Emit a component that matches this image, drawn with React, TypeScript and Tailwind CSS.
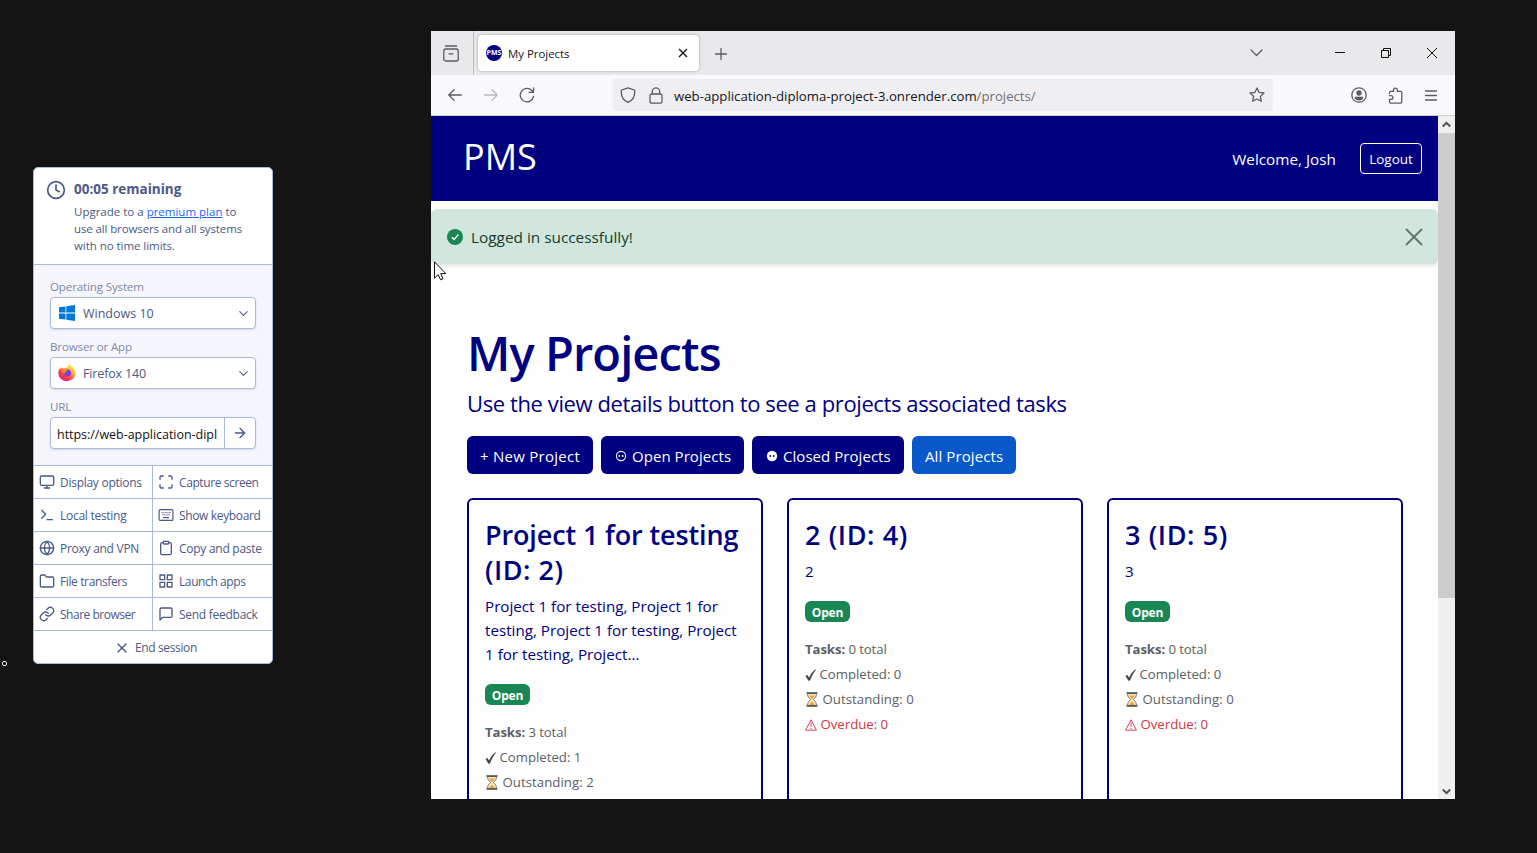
import React from "react";
import {
  FiMonitor, FiMaximize, FiTerminal, FiGlobe, FiClipboard, FiFolder, FiGrid,
  FiLink, FiMessageSquare, FiX, FiClock, FiArrowRight, FiChevronDown,
} from "react-icons/fi";

const T = ({ className = "", children }: { className?: string; children: React.ReactNode }) => (
  <span className={`whitespace-nowrap ${className}`}>{children}</span>
);

function KeyboardIcon() {
  return (
    <svg width="16" height="16" viewBox="0 0 16 16" fill="none" stroke="currentColor" strokeWidth="1.2">
      <rect x="1.1" y="2.6" width="13.8" height="10.8" rx="1" />
      <path d="M3.5 5.6h9M4.5 7.9h8" strokeDasharray="1 1" />
      <path d="M5 10.6h6" />
    </svg>
  );
}

function WindowsIcon() {
  return (
    <svg className="ml-[1px]" width="16" height="16" viewBox="0 0 16 16" fill="#0078d7">
      <path d="M0 2.3 6.5 1.4v6.2H0zM7.3 1.3 16 0v7.6H7.3zM0 8.4h6.5v6.2L0 13.7zM7.3 8.4H16V16l-8.7-1.3z" />
    </svg>
  );
}

function FirefoxIcon() {
  return (
    <svg width="18" height="18" viewBox="0 0 18 18">
      <defs>
        <linearGradient id="fx-body" x1="0.85" y1="0.1" x2="0.2" y2="0.95">
          <stop offset="0" stopColor="#fff44f" />
          <stop offset="0.35" stopColor="#ffa436" />
          <stop offset="0.6" stopColor="#ff4f3e" />
          <stop offset="1" stopColor="#e31587" />
        </linearGradient>
      </defs>
      <path d="M11.4.3c1 1.5 3.500 2.400 4.700 4.400 1 1.500 1.600 3 1.500 4.900A8.700 8.700 0 0 1 .3 9.400C.2 7 1 5.200 1.700 4.200L2 5.400 3 3l.8 1.400c1-.4 1.700-.2 2.600.2C7.700 3.300 9.400 3.600 10 3.700 10 2.200 10.500 1.200 11.400.3z" fill="url(#fx-body)" />
      <circle cx="9.600" cy="9" r="3.500" fill="#7a3fe0" />
      <path d="M4 5.200c1.200-.5 2.300 0 3 .6 1 .2 1.800.3 2.400.6-.3.900-1.700 1-2.200 1.300.2 1.300-.6 1.800-1.600 1.700-1-1.200-1.500-2.700-1.600-4.200z" fill="#ff8a16" />
    </svg>
  );
}

function Select({ icon, children }: { icon: React.ReactNode; children: React.ReactNode }) {
  return (
    <div className="flex h-8 items-center rounded-[4px] border border-[#aab8da] bg-white pl-[7px] pr-[4px] shadow-[0_1px_2px_rgba(60,70,120,0.15)]">
      <span className="flex w-[25px] items-center">{icon}</span>
      {children}
      <FiChevronDown className="ml-auto mt-[1px] text-[#5d6a8c]" size={15} />
    </div>
  );
}

function SidePanel() {
  const label = "flex h-[14px] items-center text-[11.6px] tracking-[-0.16px] text-[#7f88a8] mb-[3px]";
  const rows: [React.ReactNode, string, string, React.ReactNode, string, string][] = [
    [<FiMonitor size={16} />, "Display options", "", <FiMaximize size={16} />, "Capture screen", "tracking-[-0.4px]"],
    [<FiTerminal size={16} />, "Local testing", "", <KeyboardIcon />, "Show keyboard", "tracking-[-0.35px]"],
    [<FiGlobe size={16} />, "Proxy and VPN", "", <FiClipboard size={16} />, "Copy and paste", ""],
    [<FiFolder size={16} />, "File transfers", "tracking-[-0.38px]", <FiGrid size={16} />, "Launch apps", "tracking-[-0.4px]"],
    [<FiLink size={16} />, "Share browser", "tracking-[-0.48px]", <FiMessageSquare size={16} />, "Send feedback", ""],
  ];
  return (
    <aside className="mt-[167px] ml-[33px] h-[497px] w-[240px] overflow-hidden rounded-[5px] border border-[#aab8da] bg-white text-[12px] text-[#4b5985]">
      <div className="flex h-[96px] pl-[12px] pt-[11px]">
        <FiClock size={20} className="mt-[1px]" />
        <div className="ml-[8px]">
          <div className="flex h-[20px] items-center text-[13.5px] font-bold"><T className="mt-[1px]">00:05 remaining</T></div>
          <div className="mt-[4px] text-[11.5px] leading-[17px] tracking-[-0.12px]">
            <div><T className="tracking-[0px]">Upgrade to a <a className="text-[#1f5fff] underline">premium plan</a> to</T></div>
            <div><T>use all browsers and all systems</T></div>
            <div><T className="tracking-[-0.05px]">with no time limits.</T></div>
          </div>
        </div>
      </div>
      <div className="h-[202px] border-y border-[#aab8da] bg-[#f5f6fb] px-4 pt-[15px]">
        <div className={label}><T>Operating System</T></div>
        <Select icon={<WindowsIcon />}><T className="mt-[2px] text-[12.5px]">Windows 10</T></Select>
        <div className={`${label} mt-[11px]`}><T>Browser or App</T></div>
        <Select icon={<FirefoxIcon />}><T className="mt-[2px] text-[12.5px] tracking-[-0.15px]">Firefox 140</T></Select>
        <div className={`${label} mt-[11px]`}><T>URL</T></div>
        <div className="flex h-8 rounded-[4px] border border-[#aab8da] bg-white shadow-[0_1px_2px_rgba(60,70,120,0.15)]">
          <div className="flex w-[174px] items-center border-r border-[#aab8da] pl-[6px] pr-[7px]">
            <div className="mt-[4px] text-[12.5px] tracking-[-0.03px] text-[#111]"><T>https://web-application-dipl</T></div>
          </div>
          <div className="flex flex-1 items-center justify-center"><FiArrowRight size={16} /></div>
        </div>
      </div>
      {rows.map((r, i) => (
        <div key={i} className="flex h-[33px] border-b border-[#aab8da] tracking-[-0.27px]">
          <div className="flex w-[119px] items-center border-r border-[#aab8da] pl-[5px]">
            {r[0]}<T className={`mt-[2px] ml-[5px] ${r[2]}`}>{r[1]}</T>
          </div>
          <div className="flex items-center pl-[5px]">
            {r[3]}<T className={`mt-[2px] ml-[5px] ${r[5]}`}>{r[4]}</T>
          </div>
        </div>
      ))}
      <div className="flex h-[33px] items-center pl-[80px] tracking-[-0.37px]">
        <FiX size={16} /><T className="mt-[1px] ml-[5px]">End session</T>
      </div>
    </aside>
  );
}

const ink = { fill: "none", stroke: "#5b5b66", strokeWidth: 1.3, strokeLinecap: "round", strokeLinejoin: "round" } as const;

function TitleBar() {
  return (
    <div className="flex h-[44px] bg-[#e9e9eb]">
      <div className="flex w-[43px] items-center border-r border-[#bdbdc2] pl-[12px]">
        <svg width="16" height="17" viewBox="0 0 16 17" {...ink}>
          <path d="M2.500 1h11" /><rect x=".8" y="4" width="14.400" height="12" rx="2" /><path d="M6 8.800h4" />
        </svg>
      </div>
      <div className="mt-[4px] ml-[4px] flex h-[36px] w-[221px] items-center rounded-[4px] bg-white pl-[8px] pr-[11px] shadow-[0_0_3px_rgba(0,0,0,0.3)]">
        <span className="flex size-4 items-center justify-center overflow-hidden rounded-full bg-[#000080] text-[7px] font-bold text-white">PMS</span>
        <T className="mt-[2px] ml-[6px] text-[11.4px] text-[#15141a]">My Projects</T>
        <svg className="ml-auto" width="10" height="10" viewBox="0 0 10 10" stroke="#15141a" strokeWidth="1.400"><path d="M1 1l8 8M9 1L1 9" /></svg>
      </div>
      <svg className="mt-[17px] ml-[16px]" width="12" height="12" viewBox="0 0 12 12" {...ink}><path d="M6 .5v11M.5 6h11" /></svg>
      <svg className="mt-[18px] ml-[523px]" width="13" height="8" viewBox="0 0 13 8" {...ink}><path d="M1 1l5.500 5.500L12 1" /></svg>
      <svg className="mt-[17px] ml-[72px]" width="10" height="10" viewBox="0 0 10 10" stroke="#111"><path d="M0 4.500h10" /></svg>
      <svg className="mt-[17px] ml-[36px]" width="10" height="10" viewBox="0 0 10 10" fill="none" stroke="#111"><path d="M.5 2.500h7v7h-7zM2.500 2.500v-2h7v7h-2" /></svg>
      <svg className="mt-[17px] ml-[36px]" width="10" height="10" viewBox="0 0 10 10" stroke="#111"><path d="M0 0l10 10M10 0L0 10" /></svg>
    </div>
  );
}

function ToolBar() {
  return (
    <div className="flex h-[41px] items-center border-b border-[#cccccf] bg-[#f9f9fb]">
      <svg className="ml-[17px]" width="14" height="12" viewBox="0 0 14 12" {...ink}><path d="M13.300 6H.8M6 .8L.8 6 6 11.200" /></svg>
      <svg className="ml-[22px]" width="14" height="12" viewBox="0 0 14 12" {...ink} stroke="#b9b9be"><path d="M.7 6h12.500M8 .8L13.200 6 8 11.200" /></svg>
      <svg className="ml-[21px]" width="16" height="16" viewBox="0 0 16 16" {...ink}><path d="M14.500 9.500A6.700 6.700 0 1 1 12.800 3.500L14.500 5.200M14.500 1v4.400h-4.400" /></svg>
      <div className="ml-[78px] flex h-[32px] w-[660px] items-center bg-[#efeff1] pl-[7px] pr-[8px]">
        <svg width="16" height="16" viewBox="0 0 16 16" {...ink}><path d="M8 .8l6.300 2.200c.2.200.5.500.5.900C14.800 9.500 12 13.800 8 15.300 4 13.800 1.200 9.500 1.200 3.900c0-.4.3-.7.500-.9z" /></svg>
        <svg className="ml-[13px]" width="14" height="17" viewBox="0 0 14 17" {...ink}><rect x="1" y="7" width="12" height="9.200" rx="1.800" /><path d="M3.300 7V4.500a3.700 3.700 0 0 1 7.400 0V7" /></svg>
        <T className="mt-[3px] ml-[11px] text-[13.2px] text-[#15141a]">web-application-diploma-project-3.onrender.com<i className="not-italic text-[#6f6f78]">/projects/</i></T>
        <svg className="ml-auto" width="16" height="16" viewBox="0 0 16 16" {...ink}><path d="M8 .9l2.100 4.500 4.900.6-3.600 3.400.9 4.900L8 12l-4.300 2.300.9-4.900L1 6l4.900-.6z" /></svg>
      </div>
      <svg className="ml-[78px]" width="16" height="16" viewBox="0 0 16 16" {...ink}><circle cx="8" cy="8" r="7.200" /><circle cx="8" cy="6" r="2" fill="#5b5b66" /><path d="M4.300 10.500h7.400c-.6 1.600-2 2.300-3.700 2.300s-3.100-.7-3.700-2.300z" fill="#5b5b66" /></svg>
      <svg className="ml-[21px]" width="16" height="17" viewBox="0 0 16 17" {...ink}><path d="M1.500 6.500V5.400c0-.7.4-1 1-1h3V3a1.900 1.900 0 0 1 3.800 0v1.400h3.500c.6 0 1 .3 1 1v9.700c0 .6-.4 1-1 1H2.500c-.6 0-1-.4-1-1v-2.700H3a1.900 1.900 0 0 0 0-3.800H1.500" /></svg>
      <svg className="ml-[21px]" width="12" height="11" viewBox="0 0 12 11" {...ink}><path d="M.5 1h11M.5 5.500h11M.5 10h11" /></svg>
    </div>
  );
}

function Hourglass() {
  return (
    <svg width="12" height="15" viewBox="0 0 12 15">
      <path d="M1.500 1.500h9c0 3-1 4.500-3.300 6 2.300 1.500 3.300 3 3.300 6h-9c0-3 1-4.500 3.300-6-2.300-1.500-3.300-3-3.300-6z" fill="#fbe3bd" stroke="#777" strokeWidth=".9" />
      <path d="M3 3.500h6L6 7.200zM6 9.500l3 3.500H3z" fill="#f2a33a" />
      <path d="M.5 1h11M.5 14h11" stroke="#4a4a4a" strokeWidth="1.600" />
    </svg>
  );
}

function Stats({ total, done, left, overdue }: { total: number; done: number; left: number; overdue?: number }) {
  return (
    <div className="text-[13.2px] text-[#5b6066]">
      <div className="flex h-[25px] items-center"><T className="tracking-[-0.1px]"><b>Tasks:</b> {total} total</T></div>
      <div className="flex h-[25px] items-center">
        <svg width="12" height="12" viewBox="0 0 12 12" fill="#444"><path d="M.5 7l1.800-1 1.800 2.600C5.500 5.500 7.500 2.500 10.500.3l.5.4C8.500 3.700 6.500 7.200 5 11.500l-1.500.2z" /></svg>
        <T className="ml-[2.5px]">Completed: {done}</T>
      </div>
      <div className="flex h-[25px] items-center pl-[1px]"><Hourglass /><T className="ml-[4.5px] tracking-[0.05px]">Outstanding: {left}</T></div>
      {overdue !== undefined && (
        <div className="flex h-[25px] items-center text-[#cf3545]">
          <svg width="12" height="12" viewBox="0 0 12 12" fill="none" stroke="currentColor" strokeWidth=".9"><path d="M6 .8L11.500 11.200H.5zM6 3.500v4.300M6 9v1.200" /></svg>
          <T className="ml-[3.5px]">Overdue: {overdue}</T>
        </div>
      )}
    </div>
  );
}

function Card({ title, lines, stats }: { title: [string, string][]; lines: string[]; stats: React.ReactNode }) {
  return (
    <div className="h-[400px] w-[296px] rounded-[6px] border-2 border-[#000080] px-4 pt-[17px]">
      {title.map(([l, tracking]) => <div key={l} className="h-[35px] text-[27px] font-semibold leading-[35px]"><T className={tracking}>{l}</T></div>)}
      <div className="mt-[7px]">
        {lines.map((l) => <div key={l} className="h-[24px] text-[15.2px] leading-[24px]"><T>{l}</T></div>)}
      </div>
      <div className="mt-[18px] mb-[15px] flex h-[21px] w-[45px] items-center justify-center rounded-[6px] bg-[#198754] text-[12px] font-bold text-white"><T className="mt-[2px] tracking-[-0.2px]">Open</T></div>
      {stats}
    </div>
  );
}

function Face({ filled }: { filled?: boolean }) {
  return (
    <svg className="mt-[2px]" width="12" height="12" viewBox="0 0 12 12">
      <circle cx="6" cy="6" r={filled ? 5.200 : 4.600} fill={filled ? "#fff" : "none"} stroke="#fff" strokeWidth={filled ? 0 : 1.100} />
      <circle cx="4.300" cy="6" r=".9" fill={filled ? "#000080" : "#fff"} /><circle cx="7.700" cy="6" r=".9" fill={filled ? "#000080" : "#fff"} />
    </svg>
  );
}

function WebPage() {
  const btn = "flex h-[38px] items-center rounded-[6px] bg-[#000080] text-[15px] text-white";
  return (
    <div className="h-[683px] w-[1007px] overflow-hidden bg-[#fefefe] text-[#000080]">
      <div className="flex h-[85px] items-center bg-[#000080] pl-[32px] text-white">
        <T className="mt-[-4px] text-[36px]">PMS</T>
        <div className="ml-auto mr-[16px] flex items-center">
          <T className="mt-[2px] mr-[24px] text-[15.3px]">Welcome, Josh</T>
          <div className="flex h-[31px] w-[62px] items-center justify-center rounded-[4px] border border-white text-[13.5px]"><T className="mt-[2px]">Logout</T></div>
        </div>
      </div>
      <div className="mt-[8px] flex h-[55px] items-center rounded-[6px] bg-[#d1e7dd] pl-[16px] pr-[15px] text-[#173c2b] shadow-[0_2px_4px_rgba(0,0,0,0.12)]">
        <svg width="16" height="16" viewBox="0 0 16 16"><circle cx="8" cy="8" r="8" fill="#198754" /><path d="M4.800 8.200l2.300 2.300 4.300-5" fill="none" stroke="#fff" strokeWidth="1.300" /></svg>
        <T className="mt-[2px] ml-[8px] text-[15.35px]">Logged in successfully!</T>
        <svg className="ml-auto" width="18" height="18" viewBox="0 0 18 18" stroke="#66756d" strokeWidth="2" strokeLinecap="round"><path d="M1.500 1.500l15 15M16.500 1.500l-15 15" /></svg>
      </div>
      <div className="pl-[36px] pt-[60px]">
        <div className="h-[58px] text-[47px] font-semibold leading-[58px] tracking-[-0.9px]"><T>My Projects</T></div>
        <div className="mt-[4px] h-[34px] text-[22px] leading-[34px] tracking-[-0.4px]"><T>Use the view details button to see a projects associated tasks</T></div>
        <div className="mt-[16px] flex gap-2">
          <div className={`${btn} w-[126px] pl-[13px]`}><T className="mt-[2px] tracking-[0.27px]">+ New Project</T></div>
          <div className={`${btn} w-[143px] pl-[14px]`}><Face /><T className="mt-[2px] ml-[5px] tracking-[0.05px]">Open Projects</T></div>
          <div className={`${btn} w-[152px] pl-[14px]`}><Face filled /><T className="mt-[2px] ml-[5px] tracking-[0.05px]">Closed Projects</T></div>
          <div className="flex h-[38px] w-[104px] items-center rounded-[6px] bg-[#0a58ca] pl-[13px] text-[15px] text-white"><T className="mt-[2px] tracking-[0.1px]">All Projects</T></div>
        </div>
        <div className="mt-[24px] flex gap-6">
          <Card title={[["Project 1 for testing", "tracking-[-0.13px]"], ["(ID: 2)", "tracking-[0.5px]"]]} lines={["Project 1 for testing, Project 1 for", "testing, Project 1 for testing, Project", "1 for testing, Project..."]} stats={<Stats total={3} done={1} left={2} />} />
          <Card title={[["2 (ID: 4)", "tracking-[0.6px]"]]} lines={["2"]} stats={<Stats total={0} done={0} left={0} overdue={0} />} />
          <Card title={[["3 (ID: 5)", "tracking-[0.6px]"]]} lines={["3"]} stats={<Stats total={0} done={0} left={0} overdue={0} />} />
        </div>
      </div>
    </div>
  );
}

function ScrollBar() {
  return (
    <div className="flex w-[17px] flex-col items-center bg-[#f0f0f0]">
      <svg className="mt-[5px]" width="9" height="7" viewBox="0 0 9 7" fill="none" stroke="#505050" strokeWidth="2"><path d="M.8 5.500l3.700-3.700 3.700 3.700" /></svg>
      <div className="mt-[5px] h-[465px] w-full bg-[#cdcdcd]" />
      <svg className="mt-auto mb-[4px]" width="9" height="7" viewBox="0 0 9 7" fill="none" stroke="#505050" strokeWidth="2"><path d="M.8 1.500l3.700 3.700 3.700-3.700" /></svg>
    </div>
  );
}

export default function App() {
  return (
    <div className="relative flex h-[853px] w-[1537px] overflow-hidden bg-[#141414] font-['Open_Sans','Noto_Sans',sans-serif]">
      <SidePanel />
      <main className="mt-[31px] ml-[158px] h-[768px] w-[1024px] overflow-hidden">
        <TitleBar />
        <ToolBar />
        <div className="flex h-[683px]"><WebPage /><ScrollBar /></div>
      </main>
      <svg className="absolute left-[434px] top-[261px]" width="13" height="20" viewBox="0 0 13 20" fill="#fff" stroke="#111"><path d="M.5.8v16.400l3.700-3.600 2.400 5.200 2.400-1.100-2.300-5.100h5.100z" /></svg>
      <div className="absolute left-[2px] top-[661px] size-[5px] rounded-[2px] border border-white bg-black" />
    </div>
  );
}
